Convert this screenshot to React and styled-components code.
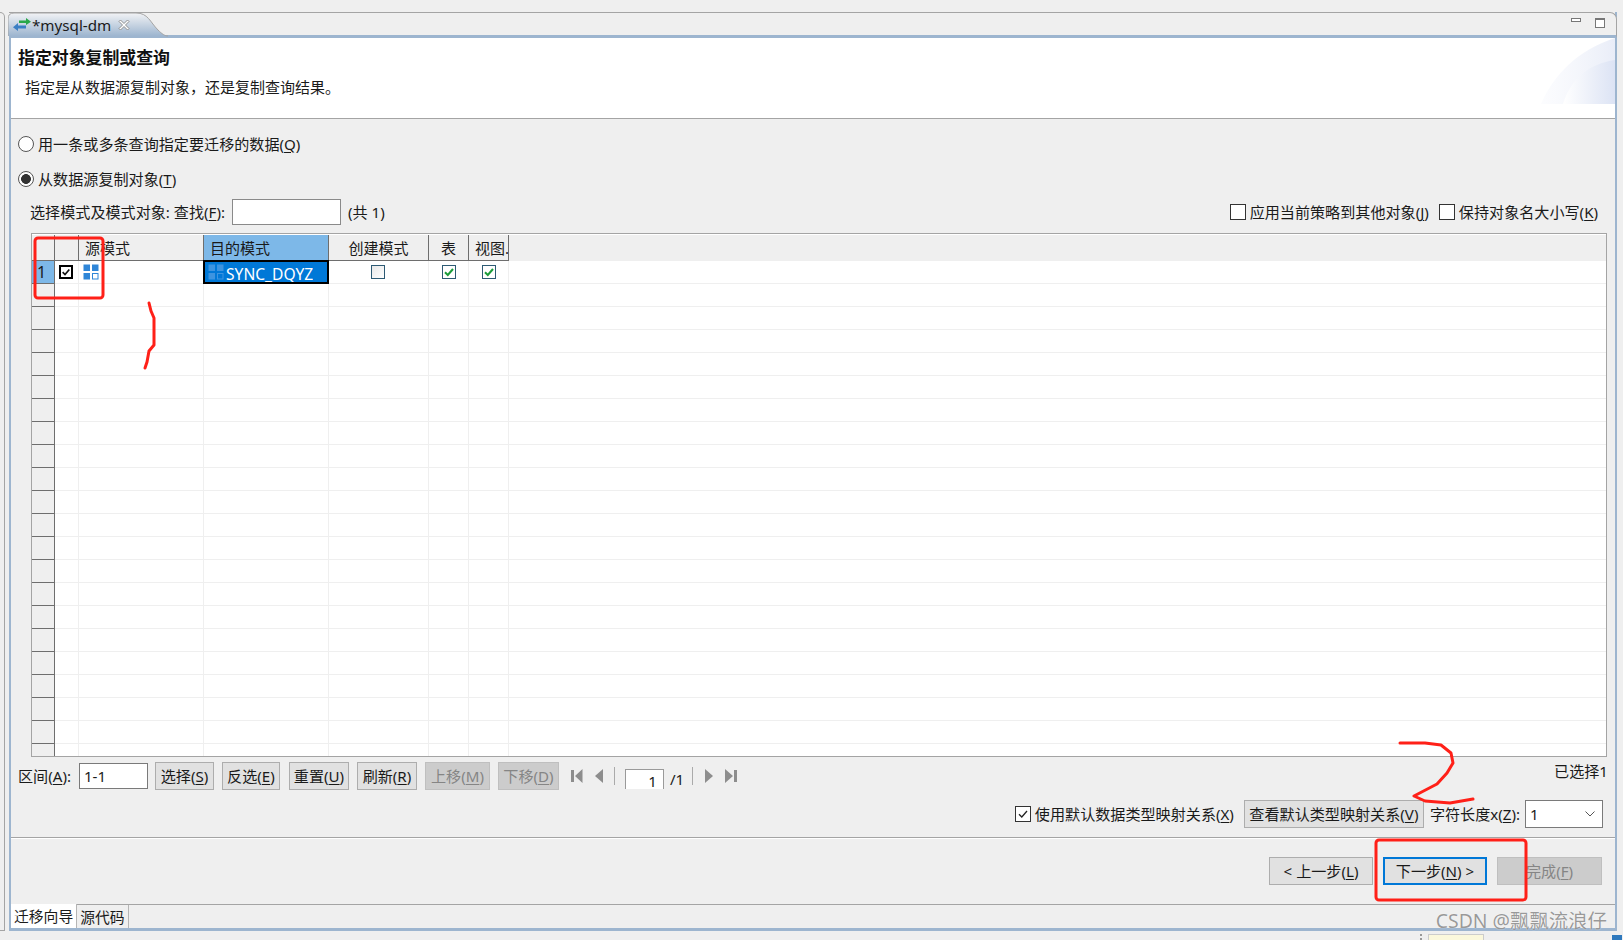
import React from 'react';
import styled, { createGlobalStyle } from 'styled-components';

const GlobalStyle = createGlobalStyle`
  html, body {
    margin: 0;
    padding: 0;
    background: #efefef;
  }
  * {
    box-sizing: border-box;
  }
`;

const fontStack = `"Noto Sans", "Noto Sans CJK SC", "Liberation Sans", sans-serif`;
const frameBlue = '#9db5cf';

const Page = styled.div`
  position: relative;
  width: 1623px;
  height: 940px;
  overflow: hidden;
  background: #efefef;
  color: #1a1a1a;
  font-family: ${fontStack};
  font-size: 15.1px;
  line-height: 20px;
`;

const Workspace = styled.div`
  display: flex;
  height: 931px;
  padding-top: 12px;
`;

const LeftRail = styled.div`
  width: 5px;
  margin-right: 4px;
  border: 1px solid #a4a4a4;
  border-left: 0;
  border-top-right-radius: 6px;
`;

const Editor = styled.div`
  width: 1608px;
  display: flex;
  flex-direction: column;
  border-left: 2px solid ${frameBlue};
  border-right: 2px solid ${frameBlue};
  border-bottom: 3px solid ${frameBlue};
`;

const TabBar = styled.div`
  position: relative;
  flex: none;
  height: 26px;
  margin: 0 -2px 0 -2px;
  display: flex;
  justify-content: flex-end;
  background: #efefef;
  border-top: 1px solid #a4a4a4;
  border-right: 1px solid #a4a4a4;
  border-top-right-radius: 7px;
  border-bottom: 3px solid ${frameBlue};
`;

const TabShape = styled.svg`
  position: absolute;
  left: -1px;
  top: -1px;
`;

const TabLabel = styled.div`
  position: absolute;
  left: 4px;
  top: 0;
  height: 23px;
  display: flex;
  align-items: center;
  gap: 1px;
  font-size: 15.2px;
`;

const CloseSlot = styled.span`
  display: flex;
  margin-left: 6px;
`;

const ViewControls = styled.div`
  display: flex;
  gap: 14px;
  padding: 5px 11px 0 0;
`;

const MinIcon = styled.span`
  width: 10px;
  height: 4px;
  background: #fff;
  border: 1px solid #777;
`;

const MaxIcon = styled.span`
  width: 10px;
  height: 10px;
  background: #fff;
  border: 1px solid #777;
  border-top-width: 2px;
`;

const Banner = styled.header`
  position: relative;
  flex: none;
  height: 81px;
  padding: 8px 0 0 7px;
  background: #fff;
  border-bottom: 1px solid #a4a4a4;
`;

const BannerArt = styled.svg`
  position: absolute;
  right: 0;
  top: 0;
`;

const BannerTitle = styled.h1`
  margin: 0;
  font-size: 16.9px;
  line-height: 24px;
  font-weight: 700;
  color: #111;
`;

const BannerText = styled.p`
  margin: 7px 0 0 7px;
  font-size: 15px;
  line-height: 20px;
`;

const Body = styled.div`
  display: flex;
  flex-direction: column;
  flex: 1;
  min-height: 0;
  padding-top: 13px;
`;

const RadioRow = styled.label`
  display: flex;
  flex: none;
  align-items: center;
  gap: 4px;
  height: 24px;
  margin: 0 0 11px 7px;
`;

const RadioMark = styled.span`
  width: 16px;
  height: 16px;
  border-radius: 50%;
  border: 1px solid #555;
  background: ${p => (p.$on ? 'radial-gradient(circle, #333 0 4.6px, #fff 5.2px)' : '#fff')};
`;

const FilterRow = styled.div`
  display: flex;
  flex: none;
  align-items: center;
  height: 26px;
  margin: -3px 17px 8px 19px;
`;

const FilterInput = styled.div`
  width: 109px;
  height: 26px;
  margin: 0 7px 0 7px;
  background: #fff;
  border: 1px solid #8a8a8a;
`;

const Spacer = styled.div`
  flex: 1;
`;

const CheckLabel = styled.label`
  display: flex;
  align-items: center;
  gap: 4px;
  margin-left: ${p => p.$gap || 0}px;
`;

const SquareBox = styled.span`
  display: flex;
  align-items: center;
  justify-content: center;
  flex: none;
  width: 16px;
  height: 16px;
  background: #fff;
  border: 1px solid #333;
`;

const Grid = styled.div`
  display: flex;
  flex-direction: column;
  flex: none;
  height: 524px;
  margin: 0 8px 0 20px;
  padding-top: 1px;
  overflow: hidden;
  background: #fff;
  border: 1px solid #a4a4a4;
`;

const columns = '23px 24px 125px 125px 100px 40px 40px 1fr';

const HeadRow = styled.div`
  display: grid;
  grid-template-columns: ${columns};
  flex: none;
  height: 26px;
  background: #efefef;
`;

const HeadCell = styled.div`
  padding: 3px 0 0 ${p => (p.$center ? 0 : 6)}px;
  text-align: ${p => (p.$center ? 'center' : 'left')};
  white-space: nowrap;
  overflow: hidden;
  font-size: 15px;
  background: ${p => (p.$active ? '#7db8e8' : 'transparent')};
  border-right: 1px solid #6e6e6e;
  border-bottom: 1px solid #6e6e6e;
`;

const HeadFill = styled.div``;

const DataRow = styled.div`
  display: grid;
  grid-template-columns: ${columns};
  flex: none;
  height: 23px;
`;

const RowHead = styled.div`
  padding-left: 5px;
  font-size: 16px;
  line-height: 22px;
  background: ${p => (p.$active ? '#7db8e8' : '#efefef')};
  border-right: 1px solid #6e6e6e;
  border-bottom: 1px solid #6e6e6e;
`;

const Cell = styled.div`
  display: flex;
  align-items: center;
  justify-content: ${p => (p.$left ? 'flex-start' : 'center')};
  padding-left: ${p => (p.$left ? 4 : 0)}px;
  padding-right: ${p => (p.$nudge ? 2 : 0)}px;
  border-right: 1px solid #efefef;
  border-bottom: 1px solid #efefef;
`;

const SelectedCell = styled.div`
  display: flex;
  align-items: center;
  gap: 2px;
  height: 24px;
  margin-top: -1px;
  margin-left: -1px;
  padding-left: 3px;
  overflow: hidden;
  color: #fff;
  font-size: 15.6px;
  line-height: 18px;
  background: #0078d7;
  border: 2px solid #000;
`;

const ClippedValue = styled.span`
  display: block;
  height: 17px;
  margin-top: 3px;
  overflow: hidden;
`;

const FillCell = styled.div`
  border-bottom: 1px solid #efefef;
`;

const RowCheck = styled.span`
  display: flex;
  align-items: center;
  justify-content: center;
  width: 14px;
  height: 14px;
  background: ${p => (p.$plain ? 'linear-gradient(135deg, #e8e8e8, #fff)' : '#fff')};
  border: ${p => (p.$strong ? '2px solid #000' : '1px solid #2d5a74')};
`;

const Toolbar = styled.div`
  display: flex;
  flex: none;
  align-items: center;
  height: 28px;
  margin: 5px 7px 0 7px;
`;

const FieldInput = styled.div`
  width: 69px;
  height: 26px;
  margin: 0 7px 0 8px;
  padding: 2px 0 0 4px;
  background: #fff;
  border: 1px solid #7a7a7a;
`;

const Btn = styled.button`
  flex: none;
  width: ${p => p.$w}px;
  height: 28px;
  margin-right: ${p => p.$gap || 0}px;
  padding: 0;
  font: inherit;
  font-size: 15.1px;
  white-space: nowrap;
  color: ${p => (p.$off ? '#858585' : '#1a1a1a')};
  background: ${p => (p.$off ? '#cccccc' : '#e1e1e1')};
  border: ${p => (p.$primary ? '2px solid #0078d7' : `1px solid ${p.$off ? '#bfbfbf' : '#adadad'}`)};
`;

const Pager = styled.div`
  display: flex;
  align-items: center;
  margin-left: 12px;
  height: 28px;
`;

const PagerDivider = styled.span`
  width: 1px;
  height: 18px;
  margin: 0 ${p => p.$right}px 0 ${p => p.$left}px;
  background: #aaa;
`;

const PagerInput = styled.div`
  width: 39px;
  height: 20px;
  margin: 5px 6px 0 0;
  padding-right: 6px;
  text-align: right;
  background: #fff;
  border: 1px solid #9a9a9a;
  border-bottom: 0;
  line-height: 23px;
`;

const PagerTotal = styled.span`
  margin-top: 5px;
`;

const PagerIcon = styled.svg`
  flex: none;
  margin-right: ${p => p.$gap || 0}px;
`;

const SelectionCount = styled.span`
  margin: -10px 0 0 auto;
`;

const OptionRow = styled.div`
  display: flex;
  flex: none;
  align-items: center;
  justify-content: flex-end;
  height: 28px;
  margin: 10px 12px 0 0;
`;

const UseDefaultText = styled.span`
  margin: 0 10px 0 4px;
`;

const OptionText = styled.span`
  margin: 0 5px 0 6px;
`;

const SelectBox = styled.div`
  display: flex;
  align-items: center;
  justify-content: space-between;
  width: 78px;
  height: 28px;
  padding: 0 6px 0 4px;
  background: #fff;
  border: 1px solid #7a7a7a;
`;

const NavArea = styled.div`
  display: flex;
  flex: none;
  justify-content: flex-end;
  gap: 10px;
  height: 68px;
  margin-top: 9px;
  padding: 19px 13px 0 0;
  border-top: 1px solid #a4a4a4;
  box-shadow: inset 0 1px 0 #fff;
  border-bottom: 1px solid #a4a4a4;
`;

const BottomTabs = styled.div`
  display: flex;
  flex: 1;
`;

const BottomTab = styled.div`
  padding: 2px 3px 0;
  margin-top: ${p => (p.$active ? '-1px' : 0)};
  background: ${p => (p.$active ? '#fff' : 'transparent')};
  border-right: 1px solid #b5b5b5;
  font-size: 14.8px;
`;

const StatusStrip = styled.div`
  display: flex;
  justify-content: flex-end;
  align-items: flex-end;
  height: 9px;
  padding-right: 1px;
`;

const StatusGrip = styled.span`
  width: 2px;
  height: 6px;
  margin-right: 6px;
  border-left: 2px dotted #999;
`;

const StatusNote = styled.span`
  width: 56px;
  height: 6px;
  margin-right: 128px;
  background: #fbf8dc;
  border: 1px solid #ccc;
  border-bottom: 0;
`;

const StatusDot = styled.span`
  width: 10px;
  height: 5px;
  background: #2f79bd;
`;

const Watermark = styled.div`
  position: absolute;
  right: 16px;
  top: 908px;
  font-size: 19.4px;
  line-height: 26px;
  color: rgba(120, 120, 120, 0.75);
  text-shadow: 0 0 1px #fff;
`;

const Annotations = styled.svg`
  position: absolute;
  left: 0;
  top: 0;
  pointer-events: none;
`;

const U = styled.span`
  text-decoration: underline;
  text-underline-offset: 2px;
`;

const SwapIcon = () => (
  <svg width="18" height="14" viewBox="0 0 18 14">
    <path d="M6 2.500h7V0l5 3.700-5 3.300V5H6z" fill="#2aa84a" />
    <path d="M13 7.500H5V5L0 9.200l5 3.800v-2.500h8z" fill="#3a7fc4" />
  </svg>
);

const CloseIcon = () => (
  <svg width="12" height="12" viewBox="0 0 12 12">
    <path d="M1 2.500 2.500 1 6 4.500 9.500 1 11 2.500 7.500 6 11 9.500 9.500 11 6 7.500 2.500 11 1 9.500 4.500 6z" fill="#fff" stroke="#8f8f8f" />
  </svg>
);

const Tick = ({ color = '#111', w = 2 }) => (
  <svg width="12" height="12" viewBox="0 0 12 12">
    <path d="M2 6.200 4.800 9 10 3" fill="none" stroke={color} strokeWidth={w} />
  </svg>
);

const SchemaIcon = ({ light }) => (
  <svg width="16" height="16" viewBox="0 0 16 16">
    <g fill={light ? '#3d94e0' : '#2f86d8'}>
      <rect x="0.5" y="0.5" width="6.5" height="6.5" />
      <rect x="9" y="0.5" width="6.5" height="6.5" />
      <rect x="0.5" y="9" width="6.5" height="6.5" />
    </g>
    <rect x="9.500" y="9.500" width="5.500" height="5.500" fill="none" stroke={light ? '#3d94e0' : '#2f86d8'} />
  </svg>
);

const First = () => (
  <PagerIcon $gap={12} width="12" height="14" viewBox="0 0 12 14">
    <path d="M0 1h3v12H0zM11.500 0v14L4 7z" fill="#8d8d8d" />
  </PagerIcon>
);

const Prev = () => (
  <PagerIcon width="8" height="14" viewBox="0 0 8 14">
    <path d="M8 0v14L0 7z" fill="#8d8d8d" />
  </PagerIcon>
);

const Next = () => (
  <PagerIcon $gap={12} width="8" height="14" viewBox="0 0 8 14">
    <path d="M0 0v14l8-7z" fill="#8d8d8d" />
  </PagerIcon>
);

const Last = () => (
  <PagerIcon width="12" height="14" viewBox="0 0 12 14">
    <path d="M0 0v14l8-7zM9 1h3v12H9z" fill="#8d8d8d" />
  </PagerIcon>
);

const toolbarButtons = [
  { w: 59, gap: 8, text: '选择', key: 'S' },
  { w: 58, gap: 9, text: '反选', key: 'E' },
  { w: 60, gap: 8, text: '重置', key: 'U' },
  { w: 60, gap: 8, text: '刷新', key: 'R' },
  { w: 65, gap: 8, text: '上移', key: 'M', off: true },
  { w: 61, gap: 0, text: '下移', key: 'D', off: true },
];

const emptyRows = Array.from({ length: 21 }, (_, i) => i);

export default function App() {
  return (
    <Page>
      <GlobalStyle />
      <Workspace>
        <LeftRail />
        <Editor>
          <TabBar>
            <TabShape width="170" height="26" viewBox="0 0 170 26">
              <defs>
                <linearGradient id="tabFill" x1="0" y1="0" x2="0" y2="1">
                  <stop offset="0" stopColor="#f2f3f5" />
                  <stop offset="1" stopColor="#9db5cf" />
                </linearGradient>
              </defs>
              <path
                d="M0 24V7Q0 1 6 1H128C140 1 142 10 150 18C154 22 157 24 160 24Z"
                fill="url(#tabFill)"
              />
              <path
                d="M0 24V7Q0 1 6 1H128C140 1 142 10 150 18C154 22 157 24 160 24"
                fill="none"
                stroke="#a4a4a4"
              />
            </TabShape>
            <TabLabel>
              <SwapIcon />
              <span>*mysql-dm</span>
              <CloseSlot>
                <CloseIcon />
              </CloseSlot>
            </TabLabel>
            <ViewControls>
              <MinIcon />
              <MaxIcon />
            </ViewControls>
          </TabBar>

          <Banner>
            <BannerArt width="74" height="66" viewBox="0 0 74 66">
              <defs>
                <linearGradient id="artA" x1="0" y1="0" x2="1" y2="0">
                  <stop offset="0" stopColor="#f4f6fc" stopOpacity="0.3" />
                  <stop offset="1" stopColor="#e9edf8" />
                </linearGradient>
                <linearGradient id="artB" x1="0" y1="0" x2="1" y2="0">
                  <stop offset="0" stopColor="#ffffff" />
                  <stop offset="1" stopColor="#dce3f4" />
                </linearGradient>
              </defs>
              <path d="M0 66C12 38 36 12 74 0V66Z" fill="url(#artA)" />
              <path d="M22 66C30 40 48 26 74 22V66Z" fill="url(#artB)" />
            </BannerArt>
            <BannerTitle>指定对象复制或查询</BannerTitle>
            <BannerText>指定是从数据源复制对象，还是复制查询结果。</BannerText>
          </Banner>

          <Body>
            <RadioRow>
              <RadioMark />
              <span>用一条或多条查询指定要迁移的数据(<U>Q</U>)</span>
            </RadioRow>
            <RadioRow>
              <RadioMark $on />
              <span>从数据源复制对象(<U>T</U>)</span>
            </RadioRow>

            <FilterRow>
              <span>选择模式及模式对象: 查找(<U>F</U>):</span>
              <FilterInput />
              <span>(共 1)</span>
              <Spacer />
              <CheckLabel>
                <SquareBox />
                <span>应用当前策略到其他对象(<U>J</U>)</span>
              </CheckLabel>
              <CheckLabel $gap={10}>
                <SquareBox />
                <span>保持对象名大小写(<U>K</U>)</span>
              </CheckLabel>
            </FilterRow>

            <Grid>
              <HeadRow>
                <HeadCell />
                <HeadCell />
                <HeadCell>源模式</HeadCell>
                <HeadCell $active>目的模式</HeadCell>
                <HeadCell $center>创建模式</HeadCell>
                <HeadCell $center>表</HeadCell>
                <HeadCell>视图.</HeadCell>
                <HeadFill />
              </HeadRow>
              <DataRow>
                <RowHead $active>1</RowHead>
                <Cell $nudge>
                  <RowCheck $strong>
                    <Tick />
                  </RowCheck>
                </Cell>
                <Cell $left>
                  <SchemaIcon />
                </Cell>
                <SelectedCell>
                  <SchemaIcon light />
                  <ClippedValue>SYNC_DQYZ</ClippedValue>
                </SelectedCell>
                <Cell $nudge>
                  <RowCheck $plain />
                </Cell>
                <Cell>
                  <RowCheck>
                    <Tick color="#1b9c3a" />
                  </RowCheck>
                </Cell>
                <Cell>
                  <RowCheck>
                    <Tick color="#1b9c3a" />
                  </RowCheck>
                </Cell>
                <FillCell />
              </DataRow>
              {emptyRows.map(i => (
                <DataRow key={i}>
                  <RowHead />
                  <Cell />
                  <Cell />
                  <Cell />
                  <Cell />
                  <Cell />
                  <Cell />
                  <FillCell />
                </DataRow>
              ))}
            </Grid>

            <Toolbar>
              <span>区间(<U>A</U>):</span>
              <FieldInput>1-1</FieldInput>
              {toolbarButtons.map(b => (
                <Btn key={b.key} $w={b.w} $gap={b.gap} $off={b.off}>
                  {b.text}(<U>{b.key}</U>)
                </Btn>
              ))}
              <Pager>
                <First />
                <Prev />
                <PagerDivider $left={11} $right={10} />
                <PagerInput>1</PagerInput>
                <PagerTotal>/1</PagerTotal>
                <PagerDivider $left={8} $right={12} />
                <Next />
                <Last />
              </Pager>
              <SelectionCount>已选择1</SelectionCount>
            </Toolbar>

            <OptionRow>
              <SquareBox>
                <Tick color="#222" w={1.3} />
              </SquareBox>
              <UseDefaultText>使用默认数据类型映射关系(<U>X</U>)</UseDefaultText>
              <Btn $w={180}>查看默认类型映射关系(<U>V</U>)</Btn>
              <OptionText>字符长度x(<U>Z</U>):</OptionText>
              <SelectBox>
                <span>1</span>
                <svg width="12" height="8" viewBox="0 0 12 8">
                  <path d="M1.500 1.500 6 6l4.500-4.500" fill="none" stroke="#555" />
                </svg>
              </SelectBox>
            </OptionRow>

            <NavArea>
              <Btn $w={104}>&lt; 上一步(<U>L</U>)</Btn>
              <Btn $w={104} $primary>下一步(<U>N</U>) &gt;</Btn>
              <Btn $w={105} $off>完成(<U>F</U>)</Btn>
            </NavArea>

            <BottomTabs>
              <BottomTab $active>迁移向导</BottomTab>
              <BottomTab>源代码</BottomTab>
            </BottomTabs>
          </Body>
        </Editor>
      </Workspace>
      <StatusStrip>
        <StatusGrip />
        <StatusNote />
        <StatusDot />
      </StatusStrip>

      <Watermark>CSDN @飘飘流浪仔</Watermark>

      <Annotations width="1623" height="940" viewBox="0 0 1623 940" fill="none" stroke="#ff2018" strokeWidth="3" strokeLinecap="round" strokeLinejoin="round">
        <rect x="35" y="238" width="68" height="60" rx="3" />
        <rect x="1376" y="840" width="150" height="60" rx="3" />
        <path d="M149 303 151 311 154 318V345L149 351 147 362 145 368" />
        <path d="M1400 743 1425 743 1441 745 1451 753 1453 763 1447 773 1437 784 1414 796 1425 801 1450 803 1473 799" />
      </Annotations>
    </Page>
  );
}
